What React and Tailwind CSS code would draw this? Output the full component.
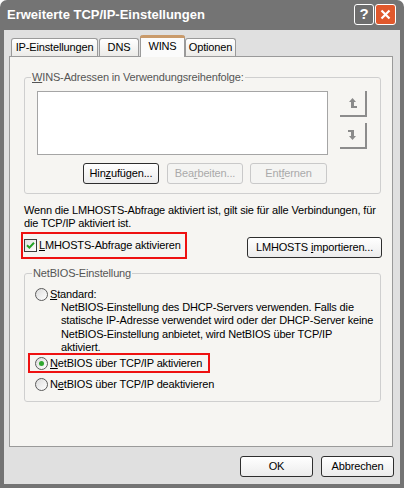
import React from "react";

const font = "font-['Tahoma','Liberation_Sans',Arial,sans-serif]";

const U = ({ children }) => <span className="underline underline-offset-[1px]">{children}</span>;

const XpButton = ({ children, disabled, className = "" }) => (
  <div
    className={`h-[21px] flex items-center justify-center rounded-[3px] border ${
      disabled
        ? "border-[#c9c9c9] bg-[#f4f4f2] text-[#aaaaaa]"
        : "border-[#2e2e2e] bg-gradient-to-b from-[#ffffff] to-[#ececec] text-black"
    } ${className}`}
  >
    <span className="whitespace-pre">{children}</span>
  </div>
);

const Radio = ({ checked }) => (
  <div className="w-[13px] h-[13px] shrink-0 rounded-full border border-[#5a5a5a] bg-gradient-to-br from-[#dcdcdc] to-[#ffffff] flex items-center justify-center">
    {checked && <div className="w-[5px] h-[5px] rounded-full bg-[#2fa62f]" />}
  </div>
);

const UpIcon = () => (
  <svg width="9" height="12" viewBox="0 0 9 12">
    <polygon points="4.5,1 8,5 1,5" fill="#8a8a8a" />
    <rect x="3" y="5" width="3" height="6" fill="#8a8a8a" />
    <rect x="3" y="9" width="6" height="2" fill="#8a8a8a" />
  </svg>
);

const DownIcon = () => (
  <svg width="9" height="12" viewBox="0 0 9 12">
    <rect x="0" y="1" width="6" height="2" fill="#8a8a8a" />
    <rect x="3" y="1" width="3" height="6" fill="#8a8a8a" />
    <polygon points="1,7 8,7 4.5,11" fill="#8a8a8a" />
  </svg>
);

const Tab = ({ children, width, selected, className = "" }) =>
  selected ? (
    <div
      className={`${width} h-[22px] -mb-px relative z-10 bg-[#fbfbfb] border-x border-[#9a9a9a] rounded-t-[3px] flex flex-col ${className}`}
    >
      <div className="h-[3px] rounded-t-[3px] bg-[#c99a6a] -mx-px" />
      <div className="flex-1 flex items-center justify-center pb-[2px]">{children}</div>
    </div>
  ) : (
    <div
      className={`${width} h-[18px] border-x border-t border-[#9a9a9a] rounded-t-[3px] bg-gradient-to-b from-[#ffffff] to-[#ecebe8] flex items-center justify-center ${className}`}
    >
      {children}
    </div>
  );

export default function App() {
  return (
    <div
      className={`w-[404px] h-[488px] bg-[#747474] rounded-t-[7px] flex flex-col overflow-hidden text-[11px] tracking-[-0.15px] text-black ${font}`}
    >
      {/* title bar */}
      <div className="h-[30px] shrink-0 flex items-center pl-[7px] pr-[8px]">
        <span className="text-white font-bold text-[13px] tracking-normal font-['Liberation_Sans',Arial,sans-serif] pb-[1px]">
          Erweiterte TCP/IP-Einstellungen
        </span>
        <div className="ml-auto flex gap-[1px] mb-[1px]">
          <div className="w-[20px] h-[21px] rounded-[3px] border border-white bg-[#6e6e6e] flex items-center justify-center text-white font-bold text-[15px] font-['Liberation_Sans',Arial,sans-serif]">
            ?
          </div>
          <div className="w-[21px] h-[21px] rounded-[3px] border border-white bg-[#e0582c] flex items-center justify-center">
            <svg width="11" height="11" viewBox="0 0 11 11">
              <path d="M1.5 1.5 L9.5 9.5 M9.5 1.5 L1.5 9.5" stroke="white" strokeWidth="2.2" />
            </svg>
          </div>
        </div>
      </div>

      {/* body */}
      <div className="flex-1 mx-[4px] mb-[4px] bg-[#e0e0e0] flex flex-col pl-[5px] pr-[7px] pt-[4px]">
        {/* tabs */}
        <div className="flex items-end ml-[2px] h-[22px]">
          <Tab width="w-[87px]">IP-Einstellungen</Tab>
          <Tab width="w-[40px]" className="ml-[1px]">DNS</Tab>
          <Tab width="w-[45px]" className="ml-[1px]" selected>WINS</Tab>
          <Tab width="w-[51px]">Optionen</Tab>
        </div>

        {/* panel */}
        <div className="h-[391px] border border-[#9a9a9a] bg-[#f6f5f2] pl-[14px] pr-[11px] pt-[14px] flex flex-col">
          <fieldset className="border border-[#cfcfcf] rounded-[3px]">
            <legend className="ml-[6px] px-[1px] leading-[13px] text-[#555555]">
              <U>W</U>INS-Adressen in Verwendungsreihenfolge:
            </legend>
            <div className="pl-[12px] pt-[7px] pb-[9px]">
              <div className="flex">
                <div className="w-[291px] h-[64px] border border-[#a5a5a5] bg-white" />
                <div className="ml-[12px] flex flex-col gap-[6px]">
                  <div className="w-[27px] h-[26px] border-r-2 border-b-2 border-[#8c8c8c] flex items-center justify-center">
                    <UpIcon />
                  </div>
                  <div className="w-[27px] h-[26px] border-r-2 border-b-2 border-[#8c8c8c] flex items-center justify-center">
                    <DownIcon />
                  </div>
                </div>
              </div>
              <div className="flex mt-[8px] ml-[46px]">
                <XpButton className="w-[76px]">
                  Hin<U>z</U>ufügen...
                </XpButton>
                <XpButton disabled className="w-[76px] ml-[8px]">
                  Bea<U>r</U>beiten...
                </XpButton>
                <XpButton disabled className="w-[77px] ml-[7px]">
                  Ent<U>f</U>ernen
                </XpButton>
              </div>
            </div>
          </fieldset>

          <p className="mt-[10px] leading-[13px]">
            Wenn die LMHOSTS-Abfrage aktiviert ist, gilt sie für alle Verbindungen, für
            <br />
            die TCP/IP aktiviert ist.
          </p>

          <div className="mt-[2px] flex items-start justify-between -ml-[3px] -mr-[1px]">
            <div className="w-[166px] h-[27px] border-2 border-[#ee1111] flex items-center pl-[1px]">
              <div className="w-[13px] h-[13px] border border-[#3c3c3c] bg-gradient-to-br from-[#e0e0e0] to-[#ffffff] flex items-center justify-center">
                <svg width="9" height="9" viewBox="0 0 9 9">
                  <path d="M1 4.2 L3.4 6.6 L8 1.8" stroke="#22a322" strokeWidth="2" fill="none" />
                </svg>
              </div>
              <span className="ml-[2px]">
                <U>L</U>MHOSTS-Abfrage aktivieren
              </span>
            </div>
            <XpButton className="w-[135px] mt-[5px]">
              LMHOSTS <U>i</U>mportieren...
            </XpButton>
          </div>

          <fieldset className="mt-[8px] border border-[#cfcfcf] rounded-[3px]">
            <legend className="ml-[7px] px-[1px] leading-[13px] text-[#555555]">NetBIOS-Einstellung</legend>
            <div className="pl-[10px] pt-[8px] pb-[10px]">
              <div className="flex items-center h-[13px]">
                <Radio />
                <span className="ml-[2px]">
                  <U>S</U>tandard:
                </span>
              </div>
              <p className="ml-[26px] leading-[13.3px]">
                NetBIOS-Einstellung des DHCP-Servers verwenden. Falls die
                <br />
                statische IP-Adresse verwendet wird oder der DHCP-Server keine
                <br />
                NetBIOS-Einstellung anbietet, wird NetBIOS über TCP/IP
                <br />
                aktiviert.
              </p>
              <div className="-mt-[1px] -ml-[7px] w-[182px] h-[20px] border-2 border-[#ee1111] flex items-center pl-[5px]">
                <Radio checked />
                <span className="ml-[2px]">
                  <U>N</U>etBIOS über TCP/IP aktivieren
                </span>
              </div>
              <div className="mt-[5px] flex items-center h-[13px]">
                <Radio />
                <span className="ml-[2px]">
                  N<U>e</U>tBIOS über TCP/IP deaktivieren
                </span>
              </div>
            </div>
          </fieldset>
        </div>

        {/* dialog buttons */}
        <div className="mt-[9px] flex justify-end gap-[8px] -mr-[1px]">
          <XpButton className="w-[73px]">OK</XpButton>
          <XpButton className="w-[73px]">Abbrechen</XpButton>
        </div>
      </div>
    </div>
  );
}
